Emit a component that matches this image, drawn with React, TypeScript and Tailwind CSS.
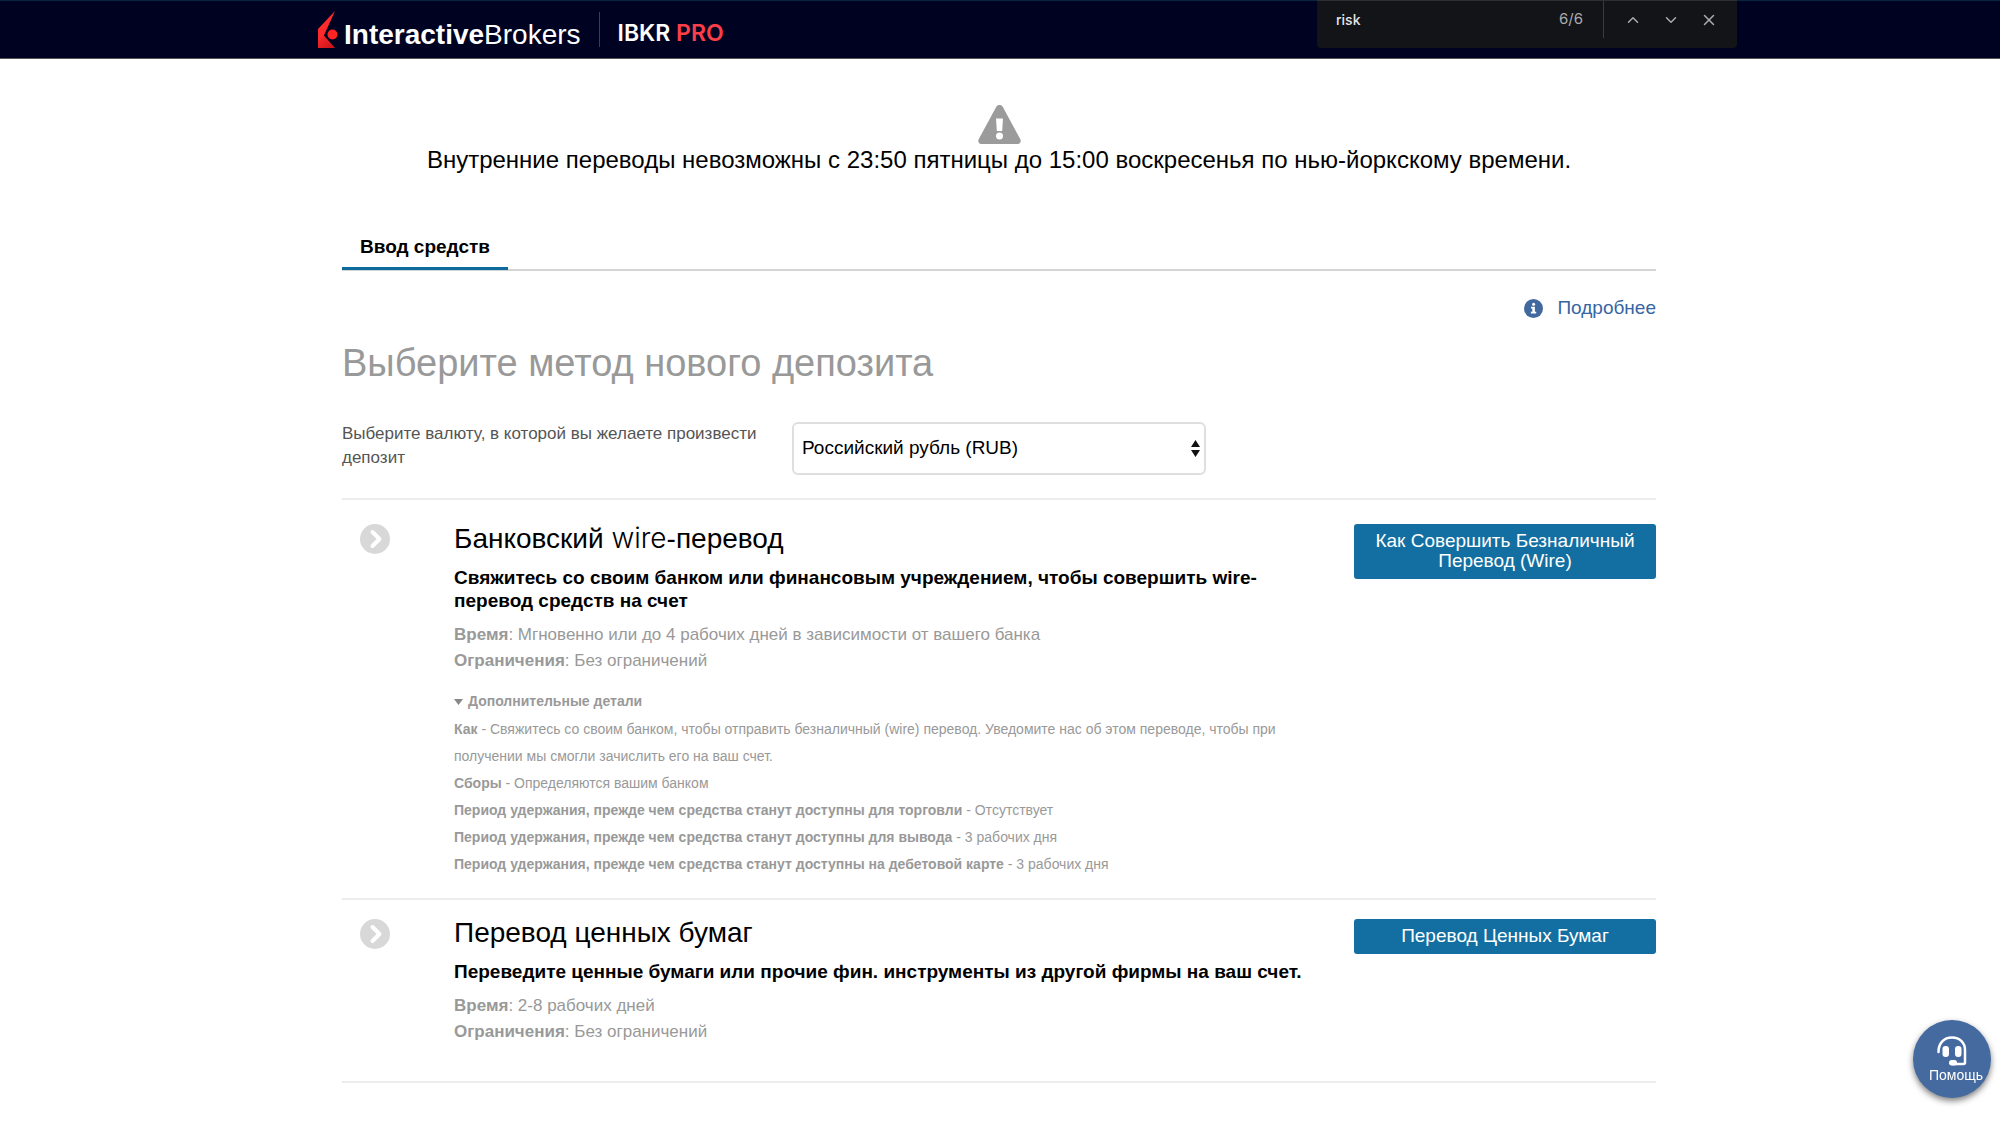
import React, { useState } from "react";
import { ChevronDown, ChevronUp, X } from "lucide-react";

interface DetailItem {
  label: string;
  value: React.ReactNode;
}

interface DepositMethod {
  id: string;
  title: React.ReactNode;
  subtitle: React.ReactNode;
  time: string;
  limits: string;
  action: React.ReactNode;
  details?: DetailItem[];
}

// Latin words use a different face than the Cyrillic text
function Latin({ children }: { children: React.ReactNode }) {
  return <span className="font-['Inter','Liberation_Sans',sans-serif] font-light">{children}</span>;
}

const METHODS: DepositMethod[] = [
  {
    id: "wire",
    title: (
      <>
        Банковский <Latin>wire</Latin>-перевод
      </>
    ),
    subtitle: "Свяжитесь со своим банком или финансовым учреждением, чтобы совершить wire-перевод средств на счет",
    time: "Мгновенно или до 4 рабочих дней в зависимости от вашего банка",
    limits: "Без ограничений",
    action: "Как Совершить Безналичный Перевод (Wire)",
    details: [
      {
        label: "Как",
        value:
          "Свяжитесь со своим банком, чтобы отправить безналичный (wire) перевод. Уведомите нас об этом переводе, чтобы при получении мы смогли зачислить его на ваш счет.",
      },
      { label: "Сборы", value: "Определяются вашим банком" },
      {
        label: "Период удержания, прежде чем средства станут доступны для торговли",
        value: "Отсутствует",
      },
      {
        label: "Период удержания, прежде чем средства станут доступны для вывода",
        value: "3 рабочих дня",
      },
      {
        label: "Период удержания, прежде чем средства станут доступны на дебетовой карте",
        value: "3 рабочих дня",
      },
    ],
  },
  {
    id: "securities",
    title: "Перевод ценных бумаг",
    subtitle: "Переведите ценные бумаги или прочие фин. инструменты из другой фирмы на ваш счет.",
    time: "2-8 рабочих дней",
    limits: "Без ограничений",
    action: "Перевод Ценных Бумаг",
  },
];

function Logo() {
  return (
    <a href="#" className="flex items-center gap-1.5 text-white">
      <svg width="20" height="38" viewBox="0 0 20 38" aria-hidden="true">
        <defs>
          <linearGradient id="flame" x1="0" y1="0" x2="1" y2="1">
            <stop offset="0" stopColor="#ff2b2b" />
            <stop offset="1" stopColor="#c41218" />
          </linearGradient>
        </defs>
        <path d="M17 0 0 18v19L8 20z" fill="#ff2a2c" />
        <path d="M5.500 24 0 30v7h17z" fill="url(#flame)" />
        <circle cx="14.500" cy="23.500" r="5" fill="#ff2424" />
      </svg>
      <span className="pt-2.5 text-[28px] leading-9">
        <b>Interactive</b>Brokers
      </span>
    </a>
  );
}

function FindBar() {
  const [query, setQuery] = useState("risk");

  return (
    <div className="absolute -top-px right-[263px] flex h-12 w-[420px] items-start rounded-b-sm border-t border-[#2e2f33] bg-[#131418] pl-[19px] font-['Inter','Liberation_Sans',sans-serif] text-[15px] text-[#a9abaf]">
      <input
        type="text"
        aria-label="Find"
        value={query}
        onChange={(e) => setQuery(e.target.value)}
        className="h-9 min-w-0 flex-1 bg-transparent text-sm font-medium text-[#e4e5e7] outline-none"
      />
      <span className="px-5 leading-9">6/6</span>
      <div className="flex h-[37px] items-center border-l border-[#3a3b3f] pr-[9px] pl-2.5">
        <button aria-label="Previous" className="flex h-9 w-[38px] items-center justify-center">
          <ChevronUp className="h-[18px] w-[18px]" />
        </button>
        <button aria-label="Next" className="flex h-9 w-[38px] items-center justify-center">
          <ChevronDown className="h-[18px] w-[18px]" />
        </button>
        <button aria-label="Close" className="flex h-9 w-[38px] items-center justify-center">
          <X className="h-[18px] w-[18px]" />
        </button>
      </div>
    </div>
  );
}

function MethodRow({ method }: { method: DepositMethod }) {
  return (
    <section
      className={
        method.details
          ? "flex gap-[30px] border-t-2 border-[#ececec] pt-6 pb-5"
          : "flex gap-[30px] border-y-2 border-[#ececec] pt-[19px] pb-9"
      }
    >
      <div className="w-[82px] shrink-0 pl-[18px]">
        <svg width="30" height="30" viewBox="0 0 30 30" aria-hidden="true">
          <circle cx="15" cy="15" r="15" fill="#d8d8d8" />
          <path
            d="m12.500 8 7 7-7 7"
            fill="none"
            stroke="#fff"
            strokeWidth="4"
            strokeLinecap="round"
            strokeLinejoin="round"
          />
        </svg>
      </div>

      <div className="-mt-1 min-w-0 flex-1 text-[#999]">
        <h2 className="text-[28px] leading-9 text-black">{method.title}</h2>
        <p className="mt-[9px] text-[19px] leading-[23px] font-bold text-black">{method.subtitle}</p>
        <div className="mt-2.5 text-[17px] leading-[26px]">
          <p>
            <b>Время</b>: {method.time}
          </p>
          <p>
            <b>Ограничения</b>: {method.limits}
          </p>
        </div>

        {method.details && (
          <details open className="mt-[14px] text-sm leading-[27px]">
            <summary className="mb-px flex list-none items-center gap-[5px] font-bold">
              <svg width="9" height="6" viewBox="0 0 9 6" aria-hidden="true">
                <path d="M0 0h9L4.500 6z" fill="#888" />
              </svg>
              Дополнительные детали
            </summary>
            {method.details.map((item) => (
              <p key={item.label}>
                <b>{item.label}</b> - {item.value}
              </p>
            ))}
          </details>
        )}
      </div>

      <div className="w-[302px] shrink-0">
        <button className="w-full rounded-[3px] bg-[#136fa1] px-4 pt-[7px] pb-2 text-[19px] leading-5 text-white">
          {method.action}
        </button>
      </div>
    </section>
  );
}

export default function App() {
  const [currency, setCurrency] = useState("RUB");

  return (
    <div className="min-h-screen bg-white font-['Liberation_Sans',Arial,sans-serif] text-black">
      <header className="relative border-t border-b border-t-[#06243f] border-b-[#555] bg-[#000222]">
        <div className="mx-auto flex h-[57px] w-full max-w-[1364px] items-center">
          <Logo />
          <div className="mx-[18px] h-[35px] w-px bg-[#1d4a60]" />
          <span className="pt-1.5 font-['Inter','Liberation_Sans',sans-serif] text-[23px] leading-8 font-semibold text-white">
            IBKR <span className="text-[#fb3e48]">PRO</span>
          </span>
        </div>
        <FindBar />
      </header>

      <div className="pr-0.5">
        <main className="mx-auto w-full max-w-[1314px] pt-[46px]">
          <div className="flex flex-col items-center text-center">
            <svg width="43" height="39" viewBox="0 0 43 39" aria-hidden="true">
              <path
                d="M18.300 1.800a3.700 3.700 0 0 1 6.400 0l17.600 32.400a3.200 3.200 0 0 1-2.800 4.800H3.500a3.200 3.200 0 0 1-2.800-4.800z"
                fill="#9b9b9b"
              />
              <path d="M18 13.500h7l-.8 12.500h-5.400z" fill="#fff" />
              <circle cx="21.500" cy="31" r="3.500" fill="#fff" />
            </svg>
            <p className="text-2xl leading-8">
              Внутренние переводы невозможны с 23:50 пятницы до 15:00 воскресенья по нью-йоркскому времени.
            </p>
          </div>

          <div role="tablist" className="mt-[57px] flex border-b-2 border-[#d4d4d4]">
            <button
              role="tab"
              aria-selected="true"
              className="-mb-px border-b-[3px] border-[#0c6a9c] px-[18px] pb-1.5 text-[19px] leading-7 font-bold"
            >
              Ввод средств
            </button>
          </div>

          <div className="mt-[23px] flex justify-end">
            <a href="#" className="flex items-center gap-[14px] text-[19px] leading-7 text-[#3765a3]">
              <svg width="19" height="19" viewBox="0 0 19 19" aria-hidden="true">
                <circle cx="9.500" cy="9.500" r="9.500" fill="#41699f" />
                <path d="M7 7.800h3.900v5h1.300v1.700H6.900v-1.700h1.400V9.500H7z" fill="#fff" />
                <circle cx="9.600" cy="5.200" r="1.500" fill="#fff" />
              </svg>
              Подробнее
            </a>
          </div>

          <h1 className="mt-[17px] text-[38px] leading-[48px] text-[#999]">Выберите метод нового депозита</h1>

          <div className="mt-[35px] mb-[23px] flex">
            <label htmlFor="currency" className="mr-[30px] w-[420px] text-[17px] leading-6 text-[#555]">
              Выберите валюту, в которой вы желаете произвести депозит
            </label>
            <div className="relative w-[414px]">
              <select
                id="currency"
                value={currency}
                onChange={(e) => setCurrency(e.target.value)}
                className="h-[53px] w-full appearance-none rounded-md border-2 border-[#dfdfdf] bg-white px-2 text-[19px]"
              >
                <option value="RUB">Российский рубль (RUB)</option>
                <option value="USD">Доллар США (USD)</option>
                <option value="EUR">Евро (EUR)</option>
              </select>
              <svg
                width="9"
                height="17"
                viewBox="0 0 9 17"
                aria-hidden="true"
                className="pointer-events-none absolute top-[18px] right-[6px]"
              >
                <path d="M4.500 0 9 7H0zM0 10h9l-4.500 7z" fill="#111" />
              </svg>
            </div>
          </div>

          {METHODS.map((method) => (
            <MethodRow key={method.id} method={method} />
          ))}
        </main>
      </div>

      <button className="fixed right-[9px] bottom-[42px] flex h-[78px] w-[78px] flex-col items-center rounded-full bg-[#456a9f] pt-4 text-sm leading-[18px] text-white shadow-[0_3px_6px_rgba(0,0,0,0.5)]">
        <svg width="30" height="30" viewBox="0 0 30 30" aria-hidden="true">
          <path
            d="M1.500 16C1.500 7 7 1.500 15 1.500S28 7 28 14v12.500q0 1.500-1.500 1.500H15"
            fill="none"
            stroke="#fff"
            strokeWidth="2.500"
            strokeLinecap="round"
          />
          <rect x="5.500" y="10" width="6.500" height="11" rx="3" fill="#fff" />
          <rect x="18" y="10" width="6.500" height="11" rx="3" fill="#fff" />
          <rect x="12" y="24" width="8" height="5.500" rx="2.700" fill="#fff" />
        </svg>
        <span className="pl-2">Помощь</span>
      </button>
    </div>
  );
}
